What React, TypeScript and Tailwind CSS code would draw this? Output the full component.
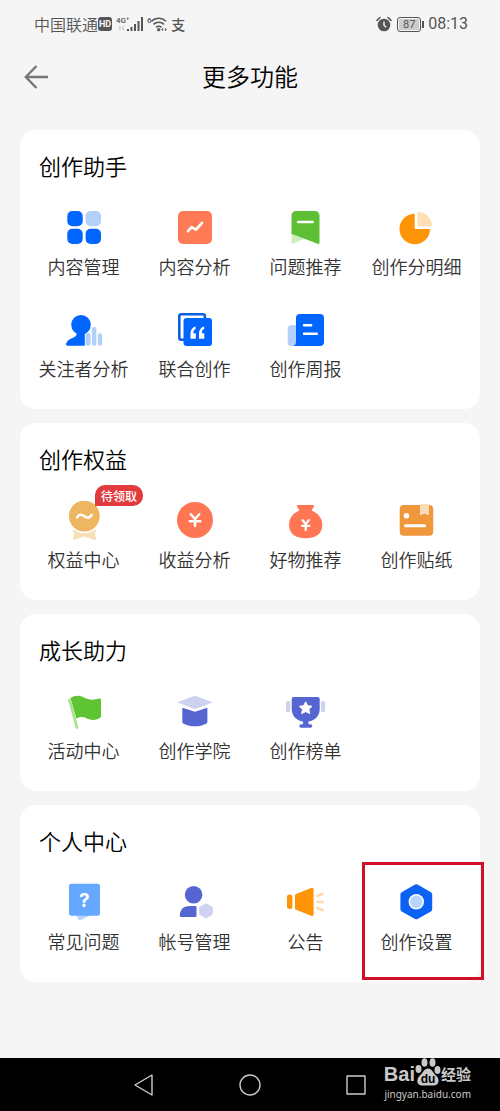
// App.tsx
// Purpose: "More features" screen of the creator center
import type { ReactNode } from "react";

type Item = {
  label: string;
  icon: ReactNode;
  badge?: string;
  active?: boolean;
};

type Section = {
  title: string;
  items: Item[];
};

function Icon({ children }: { children: ReactNode }) {
  return (
    <svg width="41" height="40" viewBox="0 0 41 40" fill="none" aria-hidden="true">
      {children}
    </svg>
  );
}

const sections: Section[] = [
  {
    title: "创作助手",
    items: [
      {
        label: "内容管理",
        icon: (
          <Icon>
            <rect x="4.3" y="3" width="15.4" height="15.2" rx="5" fill="#0066ff" />
            <rect x="22.6" y="3" width="15.4" height="15.2" rx="5" fill="#b3d0fa" />
            <rect x="4.3" y="20.8" width="15.4" height="15.2" rx="5" fill="#0066ff" />
            <rect x="22.6" y="20.8" width="15.4" height="15.2" rx="5" fill="#0066ff" />
          </Icon>
        ),
      },
      {
        label: "内容分析",
        icon: (
          <Icon>
            <rect x="4" y="3" width="34" height="33" rx="5" fill="#ff7b55" />
            <path d="M14 23.2 17.6 19.2 22 21.7 28 14.8" stroke="#fff" strokeWidth="2.6" strokeLinecap="round" strokeLinejoin="round" />
          </Icon>
        ),
      },
      {
        label: "问题推荐",
        icon: (
          <Icon>
            <path d="M6.5 24V34.5Q6.5 36.5 8.5 35.5L21 30Z" fill="#cdefc0" />
            <path d="M6.5 7.5a4.5 4.5 0 0 1 4.5-4.5h19a4.5 4.5 0 0 1 4.5 4.5V34.5q0 2-2 1.2L6.5 25.8Z" fill="#5ebf35" />
            <path d="M13.2 14H27.6" stroke="#fff" strokeWidth="2.6" strokeLinecap="round" />
          </Icon>
        ),
      },
      {
        label: "创作分明细",
        icon: (
          <Icon>
            <path d="M18.7 6.6q0-1-1-.9A15.3 15.3 0 1 0 34 22q0-1-1-1H19.7q-1 0-1-1Z" fill="#ff9409" />
            <path d="M21.3 4.7q0-1 1-1A14.5 14.5 0 0 1 36 17.6q0 1-1 1H22.3q-1 0-1-1Z" fill="#ffdfb5" />
          </Icon>
        ),
      },
      {
        label: "关注者分析",
        icon: (
          <Icon>
            <circle cx="18" cy="14.7" r="9.8" fill="#0066ff" />
            <path d="M12.5 21.5Q15.5 25 10.5 27.5C7 29 4.5 30 3.2 33.2Q2.5 35.8 5 35.8H21.8V24L24 22Z" fill="#0066ff" />
            <rect x="22.6" y="23" width="5" height="12.8" rx="2" fill="#b3d0fa" />
            <rect x="28.9" y="17" width="4.5" height="18.8" rx="2" fill="#b3d0fa" />
            <rect x="34.9" y="23.2" width="4.2" height="12.6" rx="2" fill="#b3d0fa" />
          </Icon>
        ),
      },
      {
        label: "联合创作",
        icon: (
          <Icon>
            <rect x="5.3" y="4.2" width="25.6" height="25.6" rx="2" stroke="#0b5fe0" strokeWidth="2.6" />
            <rect x="9.5" y="8" width="28.5" height="28" rx="3" fill="#0066ff" />
            <path d="M21.5 16.5C18 17.5 16.5 20.5 16.5 24V28.8H21.8V23.3H19.3C19.3 21 20 19.5 21.8 18.8Z" fill="#fff" />
            <path d="M30 16.5C26.5 17.5 25 20.5 25 24V28.8H30.3V23.3H27.8C27.8 21 28.5 19.5 30.3 18.8Z" fill="#fff" />
          </Icon>
        ),
      },
      {
        label: "创作周报",
        icon: (
          <Icon>
            <path d="M11 8a4 4 0 0 1 4-4H35a4 4 0 0 1 4 4V32a4 4 0 0 1-4 4H7.5L11 30Z" fill="#0066ff" />
            <path d="M2.7 19a3.8 3.8 0 0 1 3.8-3.8H11V31.5Q11 36 7 36H6.2a3.5 3.5 0 0 1-3.5-3.5Z" fill="#b3d0fa" />
            <path d="M19 15.3H26.2M19 23.7H31.8" stroke="#fff" strokeWidth="2.4" strokeLinecap="round" />
          </Icon>
        ),
      },
    ],
  },
  {
    title: "创作权益",
    items: [
      {
        label: "权益中心",
        badge: "待领取",
        icon: (
          <Icon>
            <path d="M10 28H33L32 34 33.2 38Q33.2 39.3 32 39L21.5 35.5 11 39Q9.8 39.3 10 38L11 34Z" fill="#f8dfb6" />
            <circle cx="21.3" cy="15" r="17.3" fill="#fff" />
            <circle cx="21.3" cy="15" r="15.4" fill="#efb662" />
            <path d="M14 16.5C16 12.8 18.5 13.2 21.3 15.2S26.5 17.5 28.5 14" stroke="#fff" strokeWidth="2.6" strokeLinecap="round" />
          </Icon>
        ),
      },
      {
        label: "收益分析",
        icon: (
          <Icon>
            <circle cx="21" cy="19" r="18" fill="#ff7654" />
            <path d="M16.8 13.2 21 18 25.2 13.2M21 18V25M15.8 20.3H26.2" stroke="#fff" strokeWidth="2.5" strokeLinecap="round" strokeLinejoin="round" />
          </Icon>
        ),
      },
      {
        label: "好物推荐",
        icon: (
          <Icon>
            <path d="M12 5.5Q11.2 4 13 4H28Q29.8 4 29 5.5L26.3 10H14.7Z" fill="#ff7654" />
            <path d="M14.5 9.5C7 12.5 4 18 4 24C4 33 11 37.2 20.7 37.2S37.3 33 37.3 24C37.3 18 34 12.5 26.5 9.5Z" fill="#ff7654" />
            <path d="M17.7 19.2 20.7 23 23.7 19.2M20.7 23V29M17 24.8H24.4" stroke="#fff" strokeWidth="2.3" strokeLinecap="round" strokeLinejoin="round" />
          </Icon>
        ),
      },
      {
        label: "创作贴纸",
        icon: (
          <Icon>
            <rect x="3.7" y="4" width="33.5" height="30.8" rx="4" fill="#f0973c" />
            <path d="M24 3H33V13.2Q33 14.5 32 14L28.5 12.5 25 14Q24 14.5 24 13.2Z" fill="#fcdcb9" />
            <circle cx="10.4" cy="14.7" r="2.8" fill="#fff" />
            <path d="M9.5 24.7H28.6" stroke="#fff" strokeWidth="3" strokeLinecap="round" />
          </Icon>
        ),
      },
    ],
  },
  {
    title: "成长助力",
    items: [
      {
        label: "活动中心",
        icon: (
          <Icon>
            <path d="M7.5 6C11 3.5 16 3 20 5C26 8.5 31 8 36.5 6.6Q38 6.3 38 8V24Q38 25.3 36.8 26C32 28.8 27 28.3 22.5 25.8C19 24.3 16 25 13.3 26.5Z" fill="#5fc433" />
            <path d="M6.5 8 14 35.5" stroke="#a6e38c" strokeWidth="2.8" strokeLinecap="round" />
          </Icon>
        ),
      },
      {
        label: "创作学院",
        icon: (
          <Icon>
            <path d="M8.3 16.5Q8.3 15.7 9.2 16L21 19.8 32.5 16Q33.4 15.7 33.4 16.5V30Q33.4 31 32.5 31.4C25 35.3 17 35.3 9.2 31.4Q8.3 31 8.3 30Z" fill="#5566d3" />
            <path d="M3 10.3 21 3.7 38.8 10.3 21 17.3Z" fill="#cfd2ef" />
          </Icon>
        ),
      },
      {
        label: "创作榜单",
        icon: (
          <Icon>
            <rect x="1" y="9" width="4.3" height="11" rx="1.5" fill="#cfd2ef" />
            <rect x="35.9" y="9" width="4.3" height="11" rx="1.5" fill="#cfd2ef" />
            <path d="M6.7 7a2 2 0 0 1 2-2H32.7a2 2 0 0 1 2 2V17C34.7 23.5 30.5 28.3 23.5 29.6V32.3H25.5a1.7 1.7 0 0 1 0 3.5H16a1.7 1.7 0 0 1 0-3.5H18V29.6C11 28.3 6.7 23.5 6.7 17Z" fill="#5566d3" />
            <path d="M20.7 9.8 22.7 13.7 27 14.3 23.9 17.3 24.7 21.6 20.7 19.6 16.7 21.6 17.5 17.3 14.4 14.3 18.7 13.7Z" fill="#fff" stroke="#fff" strokeLinejoin="round" />
          </Icon>
        ),
      },
    ],
  },
  {
    title: "个人中心",
    items: [
      {
        label: "常见问题",
        icon: (
          <Icon>
            <path d="M12.8 31 15.5 36.8Q16.2 38 17.5 37.3L28 32Z" fill="#b5d7ff" />
            <rect x="6" y="0.7" width="31" height="32" rx="2.5" fill="#64a8ff" />
            <text x="21.2" y="24" textAnchor="middle" fontFamily="Inter, sans-serif" fontSize="19" fontWeight="700" fill="#fff">?</text>
          </Icon>
        ),
      },
      {
        label: "帐号管理",
        icon: (
          <Icon>
            <circle cx="19.6" cy="11.7" r="8.8" fill="#5566d3" />
            <path d="M5.8 32.5C6 26 10 23 16 23H21.5Q22.5 23 22.5 24V33Q22.5 34 21.5 34H7.2Q5.8 34 5.8 32.5Z" fill="#5566d3" />
            <path d="M32 21.2 38 24.5V31L32 34.5 26 31V24.5Z" fill="#cfd2f3" stroke="#cfd2f3" strokeWidth="1.6" strokeLinejoin="round" />
          </Icon>
        ),
      },
      {
        label: "公告",
        icon: (
          <Icon>
            <rect x="2" y="11.6" width="5.4" height="14.5" rx="2.5" fill="#ff9409" />
            <path d="M10 12.3Q10 11.4 11 11L26 5Q28.6 4 28.6 6.5V31.3Q28.6 33.7 26 32.7L11 26.8Q10 26.4 10 25.5Z" fill="#ff9409" />
            <path d="M32.3 13 37.3 11M32.3 19H37.5M32.3 25 37.3 27" stroke="#ffdba8" strokeWidth="2.7" strokeLinecap="round" />
          </Icon>
        ),
      },
      {
        label: "创作设置",
        active: true,
        icon: (
          <Icon>
            <path d="M20.3 3.7 33.7 11.3V26.2L20.3 33.7 6.9 26.2V11.3Z" fill="#0b62f4" stroke="#0b62f4" strokeWidth="5" strokeLinejoin="round" />
            <circle cx="20.3" cy="18.7" r="7.7" fill="#fff" />
            <circle cx="20.3" cy="18.7" r="6.3" fill="#b9d3fb" />
          </Icon>
        ),
      },
    ],
  },
];

function StatusBar() {
  return (
    <div className="flex h-12 items-center justify-between pr-8 pl-[34px] text-[#555]">
      <div className="flex items-center">
        <span className="text-base leading-5 font-[350]">中国联通</span>
        <span className="rounded-[3px] bg-[#555] px-px font-[Roboto] text-[9px] leading-[14px] font-bold text-[#f5f5f5]">
          HD
        </span>
        <svg className="ml-1" width="27" height="16" viewBox="0 0 27 16" fill="#555" aria-hidden="true">
          <text x="0" y="7" fontFamily="Roboto, sans-serif" fontSize="8" fontWeight="500">4G⁺</text>
          <path d="M4 10v4M3 11l1-1M7 14v-4M8 13l-1 1" stroke="#bbb" />
          <path d="M11 13h2v2h-2zM14.5 11h2v4h-2zM18 8h2v7h-2zM21.5 5h2v10h-2zM25 1h2v14h-2z" />
        </svg>
        <svg className="ml-1" width="20" height="16" viewBox="0 0 20 16" fill="none" stroke="#555" aria-hidden="true">
          <text x="0" y="7" fontFamily="Roboto, sans-serif" fontSize="8" fontWeight="500" fill="#555" stroke="none">6</text>
          <path d="M4.5 5.200A10.500 10.500 0 0 1 19 5.200M6.500 8.400A7.500 7.500 0 0 1 17 8.400M9 11.300A4.300 4.300 0 0 1 14.500 11.300" strokeWidth="1.5" />
          <circle cx="11.7" cy="13.7" r="1.6" fill="#555" stroke="none" />
          <path d="M14.5 13.5l1.2-1.2v2.5zM19.5 13.5l-1.2-1.2v2.5z" fill="#555" strokeWidth="0.6" />
        </svg>
        <span className="ml-1 text-sm leading-4 font-medium">支</span>
      </div>
      <div className="flex items-center">
        <svg width="16" height="16" viewBox="0 0 16 16" fill="none" aria-hidden="true">
          <circle cx="8" cy="9" r="6.3" fill="#555" />
          <path d="M1 4.3 4 1.5M15 4.3 12 1.5" stroke="#555" strokeWidth="1.6" strokeLinecap="round" />
          <path d="M8 5.5V9.3L10.2 11.3" stroke="#f5f5f5" strokeWidth="1.4" />
        </svg>
        <span className="ml-[5px] flex h-[15px] w-6 items-center justify-center rounded-[3px] border border-[#555] p-px">
          <span className="flex-1 bg-[#ccc] text-center font-[Roboto] text-[11px] leading-[11px]">87</span>
        </span>
        <span className="ml-px h-[7px] w-[2px] bg-[#555]" />
        <span className="ml-1 font-[Roboto] text-base">08:13</span>
      </div>
    </div>
  );
}

function FeatureItem({ item }: { item: Item }) {
  return (
    <button type="button" className="relative flex flex-col items-center gap-[6px]">
      {item.icon}
      <span className="text-lg leading-6 font-[350] whitespace-nowrap text-[#333]">{item.label}</span>
      {item.badge && (
        <span className="absolute -top-4 left-[67px] rounded-[10px] rounded-bl-none bg-[#e23b3e] px-[6px] text-xs leading-[21px] font-medium whitespace-nowrap text-white">
          {item.badge}
        </span>
      )}
      {item.active && (
        <span className="absolute -top-[21px] -right-3 -bottom-[27px] left-px border-[3px] border-[#d0102a]" />
      )}
    </button>
  );
}

function NavBar() {
  return (
    <nav className="relative flex h-[53px] items-center justify-center gap-[82px] bg-black">
      <button type="button" aria-label="返回">
        <svg width="24" height="24" viewBox="0 0 24 24" fill="none" stroke="#ccc" strokeWidth="1.4" strokeLinejoin="round">
          <path d="M3 12 20 2V22Z" />
        </svg>
      </button>
      <button type="button" aria-label="主页">
        <svg width="24" height="24" viewBox="0 0 24 24" fill="none" stroke="#ccc" strokeWidth="1.4">
          <circle cx="12" cy="12" r="10" />
        </svg>
      </button>
      <button type="button" aria-label="最近任务">
        <svg width="24" height="24" viewBox="0 0 24 24" fill="none" stroke="#ccc" strokeWidth="1.4" strokeLinejoin="round">
          <rect x="3" y="3" width="18" height="18" />
        </svg>
      </button>
      <div className="absolute top-0 right-[29px] flex flex-col items-end text-[#c9c9c9]">
        <div className="flex h-7 items-end">
          <span className="font-[Liberation_Sans] text-xl leading-6 font-bold">Bai</span>
          <svg width="26" height="28" viewBox="0 0 26 28" fill="#c9c9c9" aria-hidden="true">
            <ellipse cx="3.5" cy="11" rx="3" ry="4" />
            <ellipse cx="9.5" cy="4.5" rx="3" ry="4.3" />
            <ellipse cx="17.5" cy="4.5" rx="3" ry="4.3" />
            <ellipse cx="22.5" cy="12" rx="3" ry="4" />
            <path d="M13 10.5C17 10.5 18 15 21 17.5C25.5 21.5 23.5 27.5 19 27.5H7C2 27.5 .5 21.5 5 17.5C8 15 9 10.5 13 10.5Z" />
            <text x="13" y="25" textAnchor="middle" fontFamily="Liberation Sans, sans-serif" fontSize="12" fontWeight="700" fill="#000">du</text>
          </svg>
          <span className="text-[15px] leading-6 font-bold">经验</span>
        </div>
        <span className="font-[Noto_Sans] text-[10px] leading-4">jingyan.baidu.com</span>
      </div>
    </nav>
  );
}

export default function App() {
  return (
    <div className="flex min-h-screen flex-col bg-[#f5f5f5] font-['Noto_Sans_CJK_SC',sans-serif]">
      <StatusBar />

      <header className="grid h-[58px] grid-cols-[1fr_auto_1fr] items-center px-6">
        <button type="button" aria-label="返回" className="justify-self-start">
          <svg width="24" height="24" viewBox="0 0 24 24" fill="none" stroke="#777" strokeWidth="2.4">
            <path d="M12.5 1 1.8 12 12.5 23M1.8 12H24" />
          </svg>
        </button>
        <h1 className="pb-[2px] text-2xl font-[350] text-black">更多功能</h1>
      </header>

      <main className="mt-6 mb-8 flex flex-1 flex-col gap-[14px] px-5">
        {sections.map((section) => (
          <section key={section.title} className="rounded-2xl bg-white pt-[18px] pb-[29px]">
            <h2 className="px-[19px] text-[22px] leading-[34px] font-[350] text-black">{section.title}</h2>
            <div className="mt-[26px] grid grid-cols-4 gap-y-8 px-2">
              {section.items.map((item) => (
                <FeatureItem key={item.label} item={item} />
              ))}
            </div>
          </section>
        ))}
      </main>

      <NavBar />
    </div>
  );
}
